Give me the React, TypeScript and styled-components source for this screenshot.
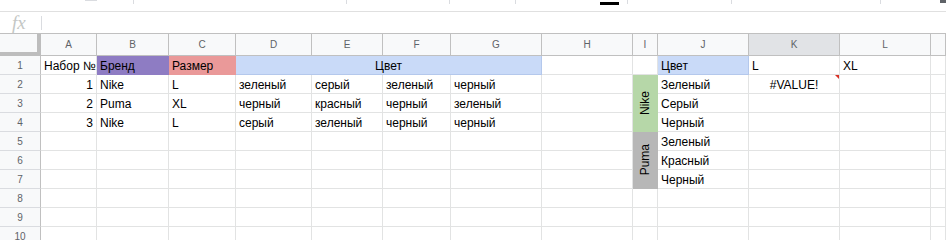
import React from 'react'
import styled, { createGlobalStyle } from 'styled-components'

const GlobalStyle = createGlobalStyle`
  html, body {
    margin: 0;
    padding: 0;
    background: #fff;
  }
  body {
    font-family: 'Liberation Sans', Arial, sans-serif;
    overflow: hidden;
  }
`

const Page = styled.div`
  width: 946px;
  height: 240px;
  display: flex;
  flex-direction: column;
  overflow: hidden;
`

// what's left of the toolbar (cut off at the top of the shot)
const Toolbar = styled.div`
  height: 11px;
  flex-shrink: 0;
  display: flex;
  align-items: flex-start;
  border-bottom: 1px solid #e0e0e0;
  overflow: hidden;
`
const ToolSep = styled.span<{ $ml: number }>`
  width: 1px;
  height: 4px;
  margin-left: ${p => p.$ml}px;
  background: #dadce0;
  flex-shrink: 0;
`
const ToolBit = styled.span<{ $ml: number; $w: number; $h: number; $top?: number; $color: string }>`
  width: ${p => p.$w}px;
  height: ${p => p.$h}px;
  margin-left: ${p => p.$ml}px;
  margin-top: ${p => p.$top ?? 0}px;
  background: ${p => p.$color};
  flex-shrink: 0;
`
const ToolIcon = styled.svg<{ $ml: number }>`
  width: 14px;
  height: 14px;
  margin-left: ${p => p.$ml}px;
  margin-top: -11px;
  flex-shrink: 0;
  fill: #5f6368;
`

const FormulaBar = styled.div`
  height: 21px;
  flex-shrink: 0;
  display: flex;
  align-items: center;
`
const Fx = styled.span`
  width: 29px;
  padding-left: 12px;
  font-family: 'Liberation Serif', serif;
  font-style: italic;
  font-size: 19px;
  line-height: 21px;
  color: #c4c7c5;
`
const FxDivider = styled.span`
  width: 1px;
  height: 14px;
  background: #dadce0;
`

const Sheet = styled.div`
  display: grid;
  grid-template-columns: 41px 56px 72px 67px 76px 71px 68px 91px 91px 25px 91px 91px 91px 1fr;
  grid-template-rows: 22px repeat(10, 19px);
  border-top: 1px solid #c0c0c0;
  flex: 1;
  overflow: hidden;
`

const Corner = styled.div`
  background: #f8f9fa;
  border-right: 4px solid #bdbdbd;
  border-bottom: 4px solid #bdbdbd;
`
const ColHead = styled.div<{ $active?: boolean }>`
  display: flex;
  align-items: center;
  justify-content: center;
  background: ${p => (p.$active ? '#e1e3e6' : '#f8f9fa')};
  border-right: 1px solid #c0c0c0;
  border-bottom: 1px solid #c0c0c0;
  font-size: 10px;
  color: #5f6368;
`
const RowHead = styled.div`
  display: flex;
  align-items: center;
  justify-content: center;
  background: #f8f9fa;
  border-right: 1px solid #c0c0c0;
  border-bottom: 1px solid #dadce0;
  font-size: 10px;
  color: #5f6368;
`

type Align = 'left' | 'center' | 'right'
const justify = { left: 'flex-start', center: 'center', right: 'flex-end' }

const Cell = styled.div<{
  $bg?: string
  $line?: string
  $align?: Align
  $col?: string
  $row?: string
  $error?: boolean
}>`
  position: relative;
  display: flex;
  align-items: flex-end;
  justify-content: ${p => justify[p.$align ?? 'left']};
  padding: 0 3px 1px;
  min-width: 0;
  background: ${p => p.$bg ?? '#fff'};
  border-right: 1px solid ${p => p.$line ?? '#e2e3e3'};
  border-bottom: 1px solid ${p => p.$line ?? '#e2e3e3'};
  font-size: 12px;
  line-height: 14px;
  color: #000;
  white-space: nowrap;
  overflow: hidden;
  ${p => (p.$col ? `grid-column: ${p.$col};` : '')}
  ${p => (p.$row ? `grid-row: ${p.$row};` : '')}
  ${p =>
    p.$error
      ? `&::after {
    content: '';
    position: absolute;
    top: 0;
    right: -1px;
    border-style: solid;
    border-width: 0 5px 5px 0;
    border-color: transparent #d93025 transparent transparent;
  }`
      : ''}
`
const BrandCell = styled(Cell)`
  align-items: center;
  justify-content: center;
  padding: 0;
`
const Vertical = styled.span`
  writing-mode: vertical-rl;
  transform: rotate(180deg);
  font-size: 12px;
  line-height: 14px;
`

const COLS = ['A', 'B', 'C', 'D', 'E', 'F', 'G', 'H', 'I', 'J', 'K', 'L', 'M']
const PURPLE = '#8e7cc3'
const PINK = '#ea9999'
const BLUE = '#c9daf8'
const BLUE_LINE = '#b4c8ec'
const GREEN = '#b6d7a8'
const GREY = '#b7b7b7'

type Spec = {
  v?: string
  bg?: string
  line?: string
  align?: Align
  span?: [number, number]
  vertical?: boolean
  error?: boolean
}

const cells: Record<string, Spec> = {
  A1: { v: 'Набор №' },
  B1: { v: 'Бренд', bg: PURPLE, line: PURPLE },
  C1: { v: 'Размер', bg: PINK, line: PINK },
  D1: { v: 'Цвет', bg: BLUE, line: BLUE_LINE, align: 'center', span: [4, 1] },
  J1: { v: 'Цвет', bg: BLUE, line: BLUE_LINE },
  K1: { v: 'L' },
  L1: { v: 'XL' },

  A2: { v: '1', align: 'right' },
  B2: { v: 'Nike' },
  C2: { v: 'L' },
  D2: { v: 'зеленый' },
  E2: { v: 'серый' },
  F2: { v: 'зеленый' },
  G2: { v: 'черный' },

  A3: { v: '2', align: 'right' },
  B3: { v: 'Puma' },
  C3: { v: 'XL' },
  D3: { v: 'черный' },
  E3: { v: 'красный' },
  F3: { v: 'черный' },
  G3: { v: 'зеленый' },

  A4: { v: '3', align: 'right' },
  B4: { v: 'Nike' },
  C4: { v: 'L' },
  D4: { v: 'серый' },
  E4: { v: 'зеленый' },
  F4: { v: 'черный' },
  G4: { v: 'черный' },

  I2: { v: 'Nike', bg: GREEN, line: GREEN, span: [1, 3], vertical: true },
  I5: { v: 'Puma', bg: GREY, line: GREY, span: [1, 3], vertical: true },

  J2: { v: 'Зеленый' },
  J3: { v: 'Серый' },
  J4: { v: 'Черный' },
  J5: { v: 'Зеленый' },
  J6: { v: 'Красный' },
  J7: { v: 'Черный' },

  K2: { v: '#VALUE!', align: 'center', error: true },
}

// cells hidden under a merge
const covered = new Set<string>()
Object.entries(cells).forEach(([key, spec]) => {
  if (!spec.span) return
  const c0 = COLS.indexOf(key[0])
  const r0 = Number(key.slice(1))
  for (let dc = 0; dc < spec.span[0]; dc++) {
    for (let dr = 0; dr < spec.span[1]; dr++) {
      if (dc || dr) covered.add(COLS[c0 + dc] + (r0 + dr))
    }
  }
})

function renderCell(col: string, row: number) {
  const key = col + row
  if (covered.has(key)) return null
  const spec = cells[key] ?? {}
  const gridCol = spec.span ? `${COLS.indexOf(col) + 2} / span ${spec.span[0]}` : undefined
  const gridRow = spec.span ? `${row + 1} / span ${spec.span[1]}` : undefined

  if (spec.vertical) {
    return (
      <BrandCell key={key} $bg={spec.bg} $line={spec.line} $col={gridCol} $row={gridRow}>
        <Vertical>{spec.v}</Vertical>
      </BrandCell>
    )
  }
  return (
    <Cell
      key={key}
      $bg={spec.bg}
      $line={spec.line}
      $align={spec.align}
      $col={gridCol}
      $row={gridRow}
      $error={spec.error}
    >
      {spec.v}
    </Cell>
  )
}

const undoPath =
  'M12.5 8c-2.65 0-5.05.99-6.9 2.6L2 7v9h9l-3.62-3.62c1.39-1.16 3.16-1.88 5.12-1.88 3.54 0 6.55 2.31 7.6 5.5l2.37-.78C21.08 11.03 17.15 8 12.5 8z'

const App = () => {
  const rows = Array.from({ length: 10 }, (_, i) => i + 1)

  return (
    <>
      <GlobalStyle />
      <Page>
        <Toolbar>
          <ToolBit $ml={85} $w={12} $h={1} $color="#dadce0" />
          <ToolSep $ml={36} />
          <ToolIcon $ml={130} viewBox="0 0 24 24">
            <path d={undoPath} />
          </ToolIcon>
          <ToolIcon $ml={12} viewBox="0 0 24 24" style={{ transform: 'scaleX(-1)' }}>
            <path d={undoPath} />
          </ToolIcon>
          <ToolSep $ml={42} />
          <ToolSep $ml={102} />
          <ToolSep $ml={65} />
          <ToolBit $ml={84} $w={19} $h={3} $top={2} $color="#000" />
          <ToolSep $ml={8} />
          <ToolSep $ml={103} />
          <ToolSep $ml={148} />
          <ToolBit $ml={59} $w={8} $h={3} $color="#5f6368" />
        </Toolbar>

        <FormulaBar>
          <Fx>fx</Fx>
          <FxDivider />
        </FormulaBar>

        <Sheet>
          <Corner />
          {COLS.map(c => (
            <ColHead key={c} $active={c === 'K'}>
              {c === 'M' ? '' : c}
            </ColHead>
          ))}
          {rows.map(r => (
            <React.Fragment key={r}>
              <RowHead>{r}</RowHead>
              {COLS.map(c => renderCell(c, r))}
            </React.Fragment>
          ))}
        </Sheet>
      </Page>
    </>
  )
}

export default App
